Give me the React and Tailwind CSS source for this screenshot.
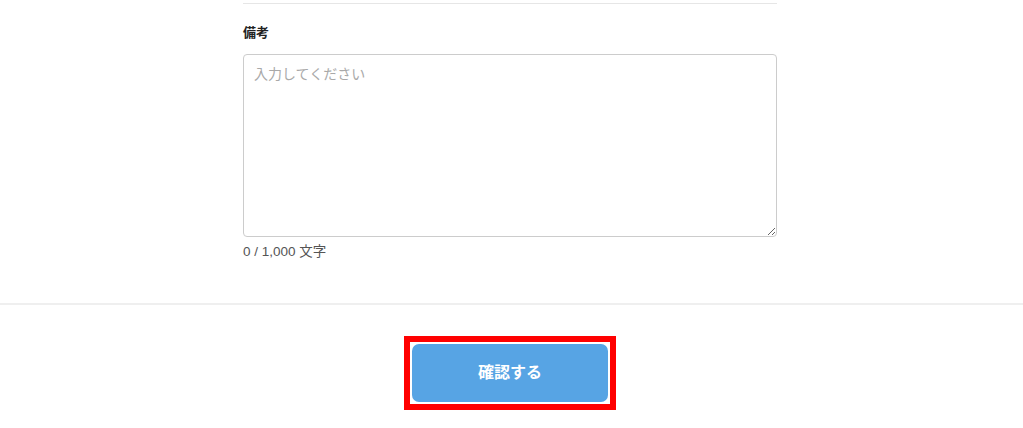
export default function App() {
  return (
    <div className="w-[1023px] h-[428px] bg-white overflow-hidden font-['Liberation_Sans','Noto_Sans_CJK_JP',sans-serif]">
      <div className="w-[534px] ml-[243px] pt-[3px]">
        <div className="border-t border-[#e6e6e6]" />
        <div className="pt-[20px] text-[13px] leading-[18px] font-bold text-[#222]">備考</div>
        <textarea
          placeholder="入力してください"
          className="mt-[12px] block w-[534px] h-[183px] rounded-[4px] border border-[#cccccc] px-[10px] pt-[9px] pb-[10px] text-[14px] leading-[20px] text-[#333] placeholder:text-[#a9a9a9] outline-none resize-y"
        />
        <p className="mt-[7px] text-[13.5px] leading-[16px] text-[#555]">0 / 1,000 文字</p>
      </div>
      <div className="mt-[43px] h-[2px] bg-[#efefef]" />
      <div className="w-[534px] ml-[243px] flex justify-center pt-[31px]">
        <div className="border-[6px] border-[#ff0000] p-[2px]">
          <button className="w-[196px] h-[58px] rounded-[7px] bg-[#57a4e4] text-white text-[16px] font-bold">
            確認する
          </button>
        </div>
      </div>
    </div>
  )
}
